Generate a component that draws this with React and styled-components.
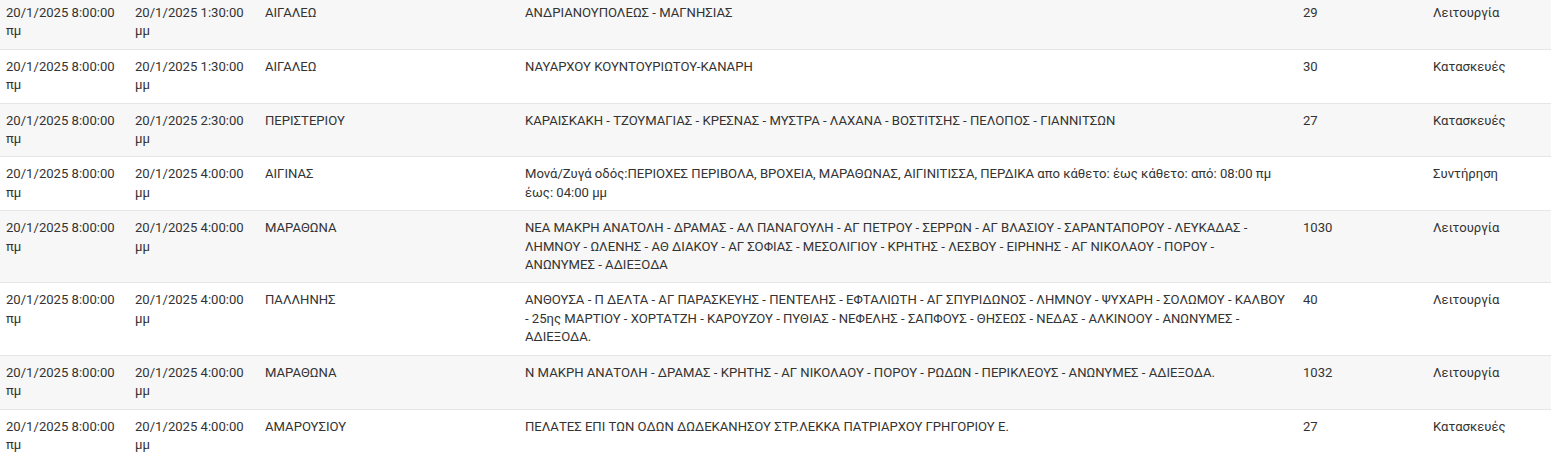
import React from "react";
import styled, { createGlobalStyle } from "styled-components";

const rows = [
  {
    start: "20/1/2025 8:00:00 πμ",
    end: "20/1/2025 1:30:00 μμ",
    area: "ΑΙΓΑΛΕΩ",
    streets: "ΑΝΔΡΙΑΝΟΥΠΟΛΕΩΣ - ΜΑΓΝΗΣΙΑΣ",
    num: "29",
    kind: "Λειτουργία",
  },
  {
    start: "20/1/2025 8:00:00 πμ",
    end: "20/1/2025 1:30:00 μμ",
    area: "ΑΙΓΑΛΕΩ",
    streets: "ΝΑΥΑΡΧΟΥ ΚΟΥΝΤΟΥΡΙΩΤΟΥ-ΚΑΝΑΡΗ",
    num: "30",
    kind: "Κατασκευές",
  },
  {
    start: "20/1/2025 8:00:00 πμ",
    end: "20/1/2025 2:30:00 μμ",
    area: "ΠΕΡΙΣΤΕΡΙΟΥ",
    streets:
      "ΚΑΡΑΙΣΚΑΚΗ - ΤΖΟΥΜΑΓΙΑΣ - ΚΡΕΣΝΑΣ - ΜΥΣΤΡΑ - ΛΑΧΑΝΑ - ΒΟΣΤΙΤΣΗΣ - ΠΕΛΟΠΟΣ - ΓΙΑΝΝΙΤΣΩΝ",
    num: "27",
    kind: "Κατασκευές",
  },
  {
    start: "20/1/2025 8:00:00 πμ",
    end: "20/1/2025 4:00:00 μμ",
    area: "ΑΙΓΙΝΑΣ",
    streets:
      "Μονά/Ζυγά οδός:ΠΕΡΙΟΧΕΣ ΠΕΡΙΒΟΛΑ, ΒΡΟΧΕΙΑ, ΜΑΡΑΘΩΝΑΣ, ΑΙΓΙΝΙΤΙΣΣΑ, ΠΕΡΔΙΚΑ απο κάθετο: έως κάθετο: από: 08:00 πμ έως: 04:00 μμ",
    num: "",
    kind: "Συντήρηση",
  },
  {
    start: "20/1/2025 8:00:00 πμ",
    end: "20/1/2025 4:00:00 μμ",
    area: "ΜΑΡΑΘΩΝΑ",
    streets:
      "ΝΕΑ ΜΑΚΡΗ ΑΝΑΤΟΛΗ - ΔΡΑΜΑΣ - ΑΛ ΠΑΝΑΓΟΥΛΗ - ΑΓ ΠΕΤΡΟΥ - ΣΕΡΡΩΝ - ΑΓ ΒΛΑΣΙΟΥ - ΣΑΡΑΝΤΑΠΟΡΟΥ - ΛΕΥΚΑΔΑΣ - ΛΗΜΝΟΥ - ΩΛΕΝΗΣ - ΑΘ ΔΙΑΚΟΥ - ΑΓ ΣΟΦΙΑΣ - ΜΕΣΟΛΙΓΙΟΥ - ΚΡΗΤΗΣ - ΛΕΣΒΟΥ - ΕΙΡΗΝΗΣ - ΑΓ ΝΙΚΟΛΑΟΥ - ΠΟΡΟΥ - ΑΝΩΝΥΜΕΣ - ΑΔΙΕΞΟΔΑ",
    num: "1030",
    kind: "Λειτουργία",
  },
  {
    start: "20/1/2025 8:00:00 πμ",
    end: "20/1/2025 4:00:00 μμ",
    area: "ΠΑΛΛΗΝΗΣ",
    streets:
      "ΑΝΘΟΥΣΑ - Π ΔΕΛΤΑ - ΑΓ ΠΑΡΑΣΚΕΥΗΣ - ΠΕΝΤΕΛΗΣ - ΕΦΤΑΛΙΩΤΗ - ΑΓ ΣΠΥΡΙΔΩΝΟΣ - ΛΗΜΝΟΥ - ΨΥΧΑΡΗ - ΣΟΛΩΜΟΥ - ΚΑΛΒΟΥ - 25ης ΜΑΡΤΙΟΥ - ΧΟΡΤΑΤΖΗ - ΚΑΡΟΥΖΟΥ - ΠΥΘΙΑΣ - ΝΕΦΕΛΗΣ - ΣΑΠΦΟΥΣ - ΘΗΣΕΩΣ - ΝΕΔΑΣ - ΑΛΚΙΝΟΟΥ - ΑΝΩΝΥΜΕΣ - ΑΔΙΕΞΟΔΑ.",
    num: "40",
    kind: "Λειτουργία",
  },
  {
    start: "20/1/2025 8:00:00 πμ",
    end: "20/1/2025 4:00:00 μμ",
    area: "ΜΑΡΑΘΩΝΑ",
    streets:
      "Ν ΜΑΚΡΗ ΑΝΑΤΟΛΗ - ΔΡΑΜΑΣ - ΚΡΗΤΗΣ - ΑΓ ΝΙΚΟΛΑΟΥ - ΠΟΡΟΥ - ΡΩΔΩΝ - ΠΕΡΙΚΛΕΟΥΣ - ΑΝΩΝΥΜΕΣ - ΑΔΙΕΞΟΔΑ.",
    num: "1032",
    kind: "Λειτουργία",
  },
  {
    start: "20/1/2025 8:00:00 πμ",
    end: "20/1/2025 4:00:00 μμ",
    area: "ΑΜΑΡΟΥΣΙΟΥ",
    streets: "ΠΕΛΑΤΕΣ ΕΠΙ ΤΩΝ ΟΔΩΝ ΔΩΔΕΚΑΝΗΣΟΥ ΣΤΡ.ΛΕΚΚΑ ΠΑΤΡΙΑΡΧΟΥ ΓΡΗΓΟΡΙΟΥ Ε.",
    num: "27",
    kind: "Κατασκευές",
  },
];

const GlobalStyle = createGlobalStyle`
  html, body {
    margin: 0;
    padding: 0;
    background: #ffffff;
    overflow: hidden;
  }
  body {
    font-family: Roboto, "Liberation Sans", Arial, sans-serif;
  }
`;

const Wrapper = styled.div`
  width: 1551px;
  height: 460px;
  overflow: hidden;
`;

const Table = styled.table`
  width: 100%;
  margin-top: -4px;
  border-collapse: collapse;
  table-layout: fixed;
  font-size: 13.1px;
  color: #333333;
`;

const Row = styled.tr`
  background: ${(p) => (p.$odd ? "#f7f7f7" : "#ffffff")};
  border-bottom: 1px solid #e6e6e6;
`;

const Cell = styled.td`
  vertical-align: top;
  padding: 8px ${(p) => (p.$wide ? "10.5px" : "6px")} 8px 6px;
  line-height: 18.4px;
  text-align: left;
  word-wrap: break-word;
`;

const widths = [129, 130, 260, 778, 130, 124];

export default function App() {
  return (
    <Wrapper>
      <GlobalStyle />
      <Table>
        <colgroup>
          {widths.map((w, i) => (
            <col key={i} style={{ width: w }} />
          ))}
        </colgroup>
        <tbody>
          {rows.map((r, i) => (
            <Row key={i} $odd={i % 2 === 0}>
              <Cell>{r.start}</Cell>
              <Cell>{r.end}</Cell>
              <Cell>{r.area}</Cell>
              <Cell $wide>{r.streets}</Cell>
              <Cell>{r.num}</Cell>
              <Cell>{r.kind}</Cell>
            </Row>
          ))}
        </tbody>
      </Table>
    </Wrapper>
  );
}
